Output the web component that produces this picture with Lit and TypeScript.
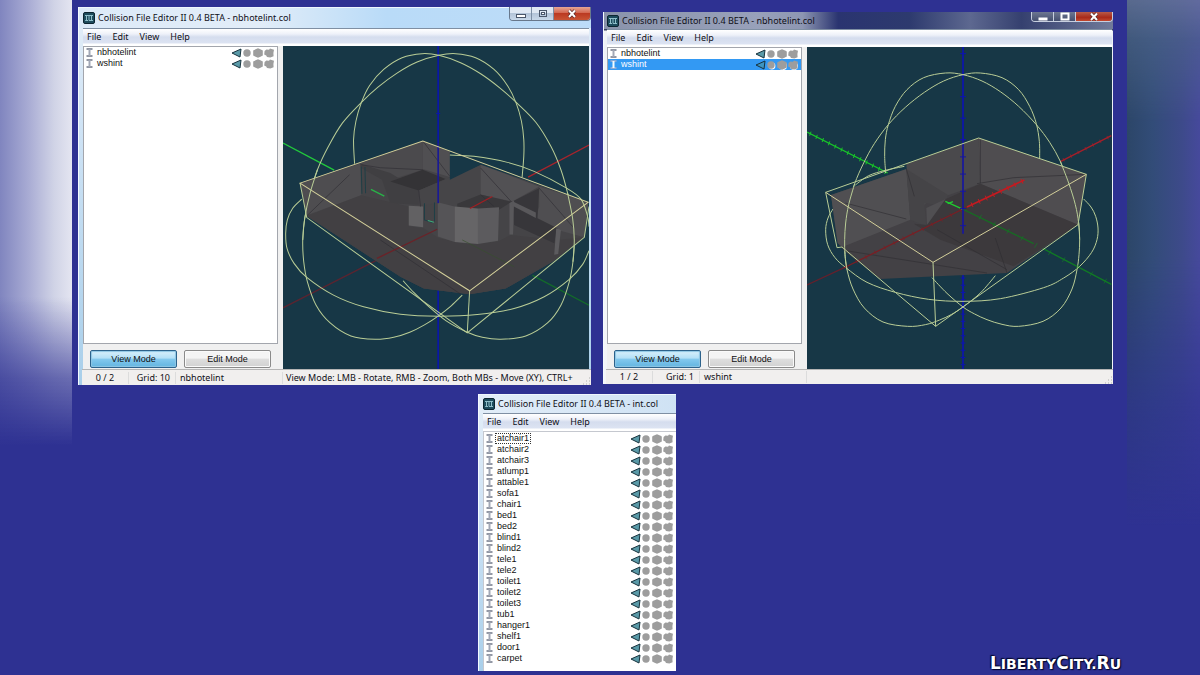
import { LitElement, html, css, svg, nothing } from "lit";
import { customElement, property } from "lit/decorators.js";
import { classMap } from "lit/directives/class-map.js";

type Pt = [number, number];

/** Smooth open curve through the given points (Catmull-Rom converted to cubic beziers). */
function curve(pts: Pt[]): string {
  let d = `M${pts[0][0]} ${pts[0][1]}`;
  for (let i = 0; i < pts.length - 1; i++) {
    const p0 = pts[i - 1] ?? pts[i];
    const p1 = pts[i];
    const p2 = pts[i + 1];
    const p3 = pts[i + 2] ?? p2;
    d += `C${p1[0] + (p2[0] - p0[0]) / 6} ${p1[1] + (p2[1] - p0[1]) / 6} ${p2[0] - (p3[0] - p1[0]) / 6} ${p2[1] - (p3[1] - p1[1]) / 6} ${p2[0]} ${p2[1]}`;
  }
  return d;
}

/** Tick marks placed along an axis segment. */
function ticks(a: Pt, b: Pt, n: number, dx: number, dy: number): string {
  let d = "";
  for (let i = 0; i <= n; i++) {
    const x = a[0] + ((b[0] - a[0]) * i) / n;
    const y = a[1] + ((b[1] - a[1]) * i) / n;
    d += `M${x - dx} ${y - dy}L${x + dx} ${y + dy}`;
  }
  return d;
}

const poly = (points: string, fill: string) => svg`<polygon points=${points} fill=${fill}></polygon>`;
const line = (d: string, stroke: string, w = 3) =>
  svg`<path d=${d} fill="none" stroke=${stroke} stroke-width=${w}></path>`;

const WIRE = "#b9cd96";
const BOX = "#d3cf9a";

const hotelScene = svg`
  ${line("M9 310L162 391", "#22c93c", 4)}
  ${line("M924 316L742 412", "#a8242c", 4)}
  ${line("M9 803L300 655", "#5a2430", 4)}
  ${line("M755 706L924 795", "#136a2a", 4)}
  ${line("M473 20V310M473 750V988", "#0a16a8", 5)}
  ${line(curve([[223, 372], [220, 300], [227, 245], [243, 190], [268, 138], [310, 90], [365, 55], [425, 43], [475, 48], [540, 70], [600, 103], [657, 145], [708, 190], [765, 248], [810, 320], [840, 390], [860, 460], [875, 535], [880, 600], [876, 665], [865, 725], [840, 795], [800, 848], [735, 887], [660, 897], [605, 891], [560, 876], [497, 842], [440, 795], [400, 757], [368, 722]]), WIRE)}
  ${line(curve([[724, 412], [729, 350], [729, 300], [722, 245], [706, 190], [680, 138], [640, 90], [585, 55], [525, 43], [475, 48], [410, 68], [350, 101], [293, 143], [242, 190], [187, 250], [145, 320], [112, 390], [90, 460], [74, 535], [68, 600], [71, 665], [82, 725], [108, 795], [150, 848], [212, 887], [285, 897], [340, 891], [388, 876], [432, 854], [475, 826], [512, 797], [545, 765]]), WIRE)}
  ${line(curve([[65, 478], [38, 505], [22, 540], [17, 580], [21, 625], [42, 670], [80, 712], [160, 765], [250, 800], [360, 822], [475, 828], [590, 823], [700, 805], [790, 770], [865, 718], [905, 673], [924, 632]]), WIRE)}
  ${poly("60,430 427,304 508,336 508,420 600,375 922,487 910,592 820,662 675,745 567,762 430,745 360,710 80,528", "#454447")}
  ${poly("60,430 240,372 243,466 80,526", "#4e4d50")}
  ${poly("240,372 427,304 427,390 330,420", "#4b4a4d")}
  ${poly("427,304 508,336 508,412 427,388", "#504f52")}
  ${poly("240,372 330,400 415,452 415,495 330,490 305,420 243,385", "#403f42")}
  ${poly("330,425 427,390 495,418 415,452", "#343336")}
  ${poly("415,452 600,375 600,465 525,500 475,488 415,500", "#464548")}
  ${poly("600,375 775,440 695,485 600,465", "#525154")}
  ${poly("530,492 600,464 692,486 655,510 530,506", "#39383b")}
  ${poly("80,528 243,466 385,500 385,560 430,565 475,595 560,612 650,605 690,585 830,600 905,592 820,662 675,745 567,762 430,745 360,710", "#424043")}
  ${poly("775,440 922,487 910,592 830,570 765,538 775,500", "#4f4e51")}
  ${poly("695,485 775,445 770,535 830,565 820,610 700,555", "#37363a")}
  ${poly("385,498 428,500 428,562 385,557", "#626163")}
  ${poly("472,487 522,500 522,606 472,590", "#555457")}
  ${poly("522,500 592,506 592,612 522,606", "#666567")}
  ${poly("592,506 655,502 652,602 592,612", "#5c5b5e")}
  ${poly("686,490 700,482 697,584 686,584", "#59585b")}
  ${poly("695,484 765,518 765,534 695,498", "#59585b")}
  ${poly("826,565 840,570 832,642 820,644", "#5c5b5e")}
  ${poly("508,340 600,375 508,420", "#173746")}
  ${line("M80 528L208 405M243 375L300 384L427 390M427 304L508 410M300 600L540 762M600 385L692 486M775 445L875 560M415 452L420 500M600 465L640 500", "#302f34", 2)}
  ${line("M243 380L245 462M254 382L256 460M432 490V540L456 548M462 488V545", "#1f3f46", 3)}
  ${line("M272 449L312 469", "#28b448", 4)}
  ${line("M470 568L290 655", "#6b2228", 4)}
  ${line("M568 506L635 470", "#a01e22", 4)}
  ${line("M545 600L700 680", "#37502f", 2)}
  ${line("M442 542L460 547", "#3fae7c", 3)}
  ${line("M473 310V490", "#1a1a94", 5)}
  ${line(ticks([473, 222], [473, 222], 1, 6, 0), "#0a16a8")}
  ${line(curve([[508, 346], [580, 350], [680, 368], [760, 395], [857, 445], [900, 478], [920, 530], [924, 560]]), WIRE)}
  ${line("M60 430L80 533L560 878L910 592L924 500", WIRE)}
  ${line("M567 752L560 878", WIRE)}
  ${line("M60 430L427 304L922 487L567 752Z", BOX)}
  ${line(curve([[860, 460], [875, 535], [880, 600], [876, 665]]), WIRE)}
  ${line(curve([[112, 390], [90, 460], [74, 535], [68, 600]]), WIRE)}`;

const shopScene = svg`
  ${line("M20 277L262 400", "#18c828", 4)}
  ${line(ticks([30, 282], [255, 397], 12, 2, -6), "#18c828", 3)}
  ${line("M933 288L780 366", "#a81e28", 4)}
  ${line(ticks([922, 294], [790, 360], 6, 2, 5), "#a81e28", 2)}
  ${line("M20 736L140 680", "#64202c", 4)}
  ${line("M700 612L933 734", "#107a24", 4)}
  ${line("M488 22V300M488 705V988", "#0c14b0", 5)}
  ${line(ticks([488, 42], [488, 300], 4, 9, 0), "#0c14b0", 3)}
  ${line(ticks([488, 715], [488, 975], 12, 7, 0), "#0c14b0", 3)}
  ${line(curve([[256, 400], [253, 350], [255, 300], [264, 255], [285, 200], [320, 150], [370, 114], [435, 100], [488, 105], [545, 124], [600, 156], [655, 200], [708, 255], [748, 308], [780, 365], [805, 430], [825, 495], [835, 550], [838, 600], [836, 645], [830, 690], [815, 748], [782, 805], [728, 845], [655, 860], [605, 854], [560, 840], [523, 823], [488, 802], [440, 761], [395, 714]]), WIRE)}
  ${line(curve([[718, 356], [717, 305], [708, 252], [688, 200], [655, 150], [605, 114], [540, 100], [488, 105], [430, 124], [372, 158], [315, 203], [264, 255], [222, 312], [190, 370], [163, 432], [145, 495], [136, 550], [133, 600], [134, 645], [140, 690], [158, 748], [192, 805], [248, 847], [322, 860], [375, 855], [418, 841], [454, 824], [488, 802], [540, 760], [585, 708]]), WIRE)}
  ${line(curve([[98, 508], [83, 535], [76, 570], [82, 615], [104, 654], [138, 685], [200, 728], [285, 758], [385, 779], [488, 785], [600, 777], [730, 744], [790, 715], [838, 680], [874, 638], [890, 600], [893, 565], [886, 530], [872, 502], [850, 478]]), WIRE)}
  ${line(curve([[165, 436], [205, 408], [255, 392], [312, 380]]), WIRE)}
  ${poly("92,466 320,388 535,295 858,404 833,555 620,700 238,718 130,632 112,610", "#434145")}
  ${poly("92,466 318,388 330,540 126,622 112,610", "#504f52")}
  ${poly("318,372 535,295 540,432 378,490 330,540", "#4a494c")}
  ${poly("535,295 858,404 833,555 540,432", "#4f4d50")}
  ${poly("318,388 442,465 436,500 372,490 378,560 330,540", "#454447")}
  ${poly("378,505 436,478 436,530 380,555", "#504f52")}
  ${poly("436,478 540,432 833,555 640,680 420,600 340,552 380,556", "#3c393c")}
  ${line("M318 388L342 470M540 300V430M135 490L318 538M530 432L640 414L858 404M585 595L620 700M130 632L560 700M410 570L620 690", "#302f34", 2)}
  ${line("M130 685L500 502", "#7a1e24", 4)}
  ${line("M500 502L672 421", "#c41a20", 5)}
  ${line(ticks([140, 680], [480, 512], 12, 3, 6), "#7a1e24", 2)}
  ${line(ticks([515, 495], [665, 425], 7, 3, 7), "#c41a20", 3)}
  ${line("M435 485L490 510", "#20cc30", 4)}
  ${line("M442 492L458 486", "#20cc30", 4)}
  ${line("M490 510L700 612", "#186a24", 4)}
  ${line(ticks([540, 532], [915, 724], 9, 4, -7), "#107a24", 2)}
  ${line("M488 300V582", "#1616a0", 5)}
  ${line(ticks([488, 300], [488, 558], 5, 9, 0), "#1616a0", 3)}
  ${line("M858 404L833 555L406 860", WIRE, 3)}
  ${line("M76 458L110 624L125 622L285 758L406 860L398 668", WIRE)}
  ${line("M76 458L535 295L858 404", WIRE)}
  ${line("M76 458L398 668L858 404", BOX)}
  ${line(curve([[780, 365], [805, 430], [825, 495], [835, 550], [838, 600]]), WIRE)}
  ${line(curve([[163, 432], [145, 495], [136, 550], [133, 600], [134, 645], [140, 690]]), WIRE)}`;

const scenes: Record<string, unknown> = {
  hotel: svg`<svg viewBox="9 20 915 966" preserveAspectRatio="xMidYMid slice">${hotelScene}</svg>`,
  shop: svg`<svg viewBox="20 22 915 966" preserveAspectRatio="xMidYMid slice">${shopScene}</svg>`,
};

const appIcon = html`<svg class="app-icon" viewBox="0 0 12 12" aria-hidden="true">
  <rect x="0.5" y="0.5" width="11" height="11" rx="1.5" fill="#1d4b5c" stroke="#0c2530"></rect>
  <path d="M2 3.5H10M3.5 3.5V8M6 3.5V8M8.5 3.5V8M2.2 8.5H5M5.8 8.5H10" stroke="#8fbfca" stroke-width="1" fill="none"></path>
</svg>`;

const beamIcon = html`<svg class="beam" viewBox="0 0 7 9" aria-hidden="true">
  <path d="M0.5 1H6.5M0.5 8H6.5" stroke="#6f7686" stroke-width="1.4"></path>
  <path d="M3.5 1V8" stroke="#a2a8b6" stroke-width="2"></path>
</svg>`;

@customElement("collision-row")
class CollisionRow extends LitElement {
  static styles = css`
    :host {
      display: flex;
      align-items: center;
      height: 11px;
      padding: 0 2px;
      color: #111;
    }
    :host([selected]) {
      background: #3399f3;
      color: #fff;
    }
    .beam { width: 7px; height: 9px; flex: none; }
    :host([selected]) .beam { filter: brightness(1.5); }
    .name { padding: 0 1px; margin-left: 3px; line-height: 9px; }
    :host([focused]) .name { outline: 1px dotted #333; }
    .flags { width: 44px; height: 10px; margin-left: auto; flex: none; }
  `;
  @property() name = "";
  @property({ type: Boolean, reflect: true }) selected = false;
  render() {
    const hi = this.selected ? "#fff" : "none";
    return html`${beamIcon}<span class="name">${this.name}</span>
      <svg class="flags" viewBox="0 0 44 10" aria-hidden="true">
        <path d="M1 5L10 1L9 9Z" fill=${this.selected ? "#3f95c0" : "#5a9aa8"} stroke="#17323d" stroke-width="1"></path>
        <g fill=${hi} transform="translate(1 1)">
          <circle cx="16" cy="5" r="3.4"></circle><circle cx="27" cy="5" r="4"></circle><circle cx="38" cy="5" r="4"></circle>
        </g>
        <g fill="#9d9d9d">
          <circle cx="16" cy="5" r="3.7"></circle>
          <path d="M27 0.2L29.4 1.2L31.8 2.4V7.6L29.4 8.8L27 9.8L24.6 8.8L22.2 7.6V2.4L24.6 1.2Z"></path>
          <path d="M33.6 3L35.4 1.4L38 1.8L39 0.6L43 1.8L42.4 5L42.6 8.2L39.4 9.6L36 9L35.2 7.4L33.2 6.4Z"></path>
        </g>
      </svg>`;
  }
}

@customElement("editor-window")
class EditorWindow extends LitElement {
  static styles = css`
    :host {
      display: block;
      background: linear-gradient(#e4eef8 0, #cfe3f5 120px, #a9cfea 100%);
      font: 9px/12px "Noto Sans", sans-serif;
      color: #101018;
    }
    .window { display: flex; flex-direction: column; padding: 0 2px 0 4px; border-left: 1px solid #f4faff; }
    .window.dark { padding: 0 1px 0 3px; background: linear-gradient(#5d6780 0, #39415f 18px, #eef1f6 19px, #f4f6f9 100%); }
    .window.cropped { padding-right: 0; }
    .title {
      display: flex;
      align-items: center;
      gap: 3px;
      height: 21px;
      margin: 0 -2px 0 -4px;
      padding-left: 4px;
      background: linear-gradient(90deg, #dceaf8, #e2edf8 35%, #b9dbf8 60%, #bddcf8);
      box-shadow: inset 0 1px #eef6fd;
    }
    .cropped .title { height: 19px; margin-right: 0; background: linear-gradient(90deg, #e2edf8, #cfe2f4); }
    .dark .title {
      height: 17px;
      margin: 0 -1px 0 -3px;
      padding-left: 3px;
      background: linear-gradient(90deg, #8a93ab, #98a1ba 30%, #8d96b2 39%, #2a3470 46%, #2d3a6e 60%, #5d6890 72%, #35406f 82%, #717b9a);
      box-shadow: none;
    }
    .title h1 { margin: 0; font-size: inherit; font-weight: 400; white-space: nowrap; }
    .app-icon { width: 12px; height: 12px; flex: none; }
    .caption { display: flex; align-self: flex-start; margin-left: auto; height: 14px; border: 1px solid #68788c; border-top: 0; border-radius: 0 0 4px 4px; overflow: hidden; box-sizing: border-box; }
    .dark .caption { height: 10px; border-color: #c7cfdf; }
    .caption button { display: grid; place-items: center; width: 22px; border: 0; border-right: 1px solid #7c8ea4; padding: 0; background: linear-gradient(#dfe8f3 45%, #b3c4d8 50%, #c9d9ea); }
    .caption button:last-child { width: 36px; border: 0; background: linear-gradient(#e5a596 0, #d3674f 45%, #bb3a22 50%, #c95434); }
    .dark .caption button { background: linear-gradient(#6d7791, #444f70); border-color: #c7cfdf; }
    .dark .caption button:last-child { background: linear-gradient(#b85a48, #a92a1a 60%, #c2492f); }
    .caption svg { width: 10px; height: 10px; }
    nav {
      display: flex;
      gap: 11px;
      height: 16px;
      padding: 0 4px;
      align-items: center;
      border-top: 1px solid #7f8fa3;
      background: linear-gradient(#fff 0, #eef1f9 5px, #d5ddee 8px, #dce3f2 14px, #fff 15px);
    }
    nav button { border: 0; padding: 0; background: none; font: inherit; color: inherit; }
    .body { display: flex; background: #f0f0f0; border-top: 1px solid #fff; }
    .side { display: flex; flex-direction: column; flex: none; width: 200px; box-sizing: border-box; padding-right: 5px; font-family: "Liberation Sans", Arial, sans-serif; }
    .cropped .side { width: auto; flex: 1; padding: 0; }
    .list { flex: 1; box-sizing: border-box; border: 1px solid #a3a6ad; background: #fff; }
    .cropped .list { border-right: 0; border-bottom: 0; border-color: #c5c8cf; padding: 1px 0 7px; }
    .modes { display: grid; grid-template-columns: 1fr 1fr; gap: 7px; padding: 6px 7px 1px; }
    .modes button { height: 18px; padding: 0; border: 1px solid #8a8a8a; border-radius: 2px; background: linear-gradient(#f4f4f4 45%, #dedede 50%, #d2d2d2); font: inherit; color: #111; box-shadow: inset 0 0 0 1px #fafafa; }
    .modes button.on { border-color: #2c628b; background: linear-gradient(#d9f0fb 0, #b3e0f7 45%, #84c9ee 50%, #62b4e0); box-shadow: inset 0 0 1px 1px #8ec6e4; }
    .view { flex: 1; min-width: 0; background: #173746; }
    .view svg { display: block; width: 100%; }
    footer { display: flex; height: 15px; margin: 0 -2px 0 -1px; align-items: center; background: #f1efee; border-top: 1px solid #b5b5b5; white-space: nowrap; }
    .dark footer { height: 14px; margin-right: -1px; }
    footer span { box-sizing: border-box; border-right: 1px solid #dcdcdc; }
    .count { width: 47px; text-align: center; }
    .grid { width: 47px; padding-right: 5px; text-align: right; }
    .model { width: 107px; padding-left: 4px; }
    footer .hint { flex: 1; min-width: 0; overflow: hidden; border: 0; padding-left: 3px; }
    .grip { width: 8px; height: 8px; flex: none; align-self: flex-end; }
  `;
  @property() file = "";
  @property() scene = "";
  @property() count = "";
  @property() grid = "";
  @property() model = "";
  @property() hint = "";
  @property({ type: Array }) items: string[] = [];
  @property({ type: Number }) selected = -1;
  @property({ type: Number }) focusedRow = -1;
  @property({ type: Boolean }) dark = false;

  private renderCaption() {
    const ink = this.dark ? "none" : "#4a5669";
    return html`<div class="caption">
      <button aria-label="Minimize"><svg viewBox="0 0 10 10"><rect x="0.5" y="5.5" width="9" height="3" fill="#fff" stroke=${ink}></rect></svg></button>
      <button aria-label="Maximize"><svg viewBox="0 0 10 10"><rect x="1.5" y="1.5" width="7" height="6" fill="none" stroke=${this.dark ? "#fff" : "#4a5669"} stroke-width=${this.dark ? 2 : 1}></rect>${this.dark ? nothing : svg`<rect x="3.5" y="3.5" width="3" height="2" fill="#fff" stroke=${ink}></rect>`}</svg></button>
      <button aria-label="Close"><svg viewBox="0 0 10 10"><path d="M2 1.5L8 8M8 1.5L2 8" stroke="#5c2a2a" stroke-width="3.4"></path><path d="M2 1.5L8 8M8 1.5L2 8" stroke="#fff" stroke-width="2"></path></svg></button>
    </div>`;
  }

  render() {
    const full = this.scene !== "";
    return html`<section class=${classMap({ window: true, dark: this.dark, cropped: !full })}>
      <header class="title">${appIcon}<h1>Collision File Editor II 0.4 BETA - ${this.file}</h1>${full ? this.renderCaption() : nothing}</header>
      <nav>${["File", "Edit", "View", "Help"].map((m) => html`<button>${m}</button>`)}</nav>
      <div class="body">
        <div class="side">
          <div class="list" role="listbox" aria-label="Models">
            ${this.items.map((name, i) => html`<collision-row role="option" .name=${name} ?selected=${i === this.selected} ?focused=${i === this.focusedRow}></collision-row>`)}
          </div>
          ${full ? html`<div class="modes"><button class="on">View Mode</button><button>Edit Mode</button></div>` : nothing}
        </div>
        ${full ? html`<div class="view">${scenes[this.scene]}</div>` : nothing}
      </div>
      ${full
        ? html`<footer><span class="count">${this.count}</span><span class="grid">${this.grid}</span><span class="model">${this.model}</span><span class="hint">${this.hint}</span>
            <svg class="grip" viewBox="0 0 8 8"><path d="M6 1h1M6 4h1M3 4h1M6 7h1M3 7h1M0 7h1" stroke="#b0b0b0"></path></svg></footer>`
        : nothing}
    </section>`;
  }
}

@customElement("app-root")
class AppRoot extends LitElement {
  static styles = css`
    :host { display: grid; grid-template-columns: 72fr 1055fr 73fr; min-height: 100vh; background: #2e3192; }
    .left {
      background:
        linear-gradient(transparent 44%, #2e3192aa 56%, #2e3192 66%),
        linear-gradient(90deg, #8085bf, #a9acd4 40%, #d0d3e6 75%, #e4e5f1);
    }
    .right {
      background:
        linear-gradient(#6f7ba0aa 0, #51688c88 6%, transparent 18%, transparent 38%, #2e3192aa 60%, #2e3192 78%),
        linear-gradient(90deg, #2c4668, #324c78 35%, #3d4a8a 75%, #46499c);
    }
    main { padding: 7px 14px 4px 6px; }
    .pair { display: grid; grid-template-columns: 513fr 510fr; gap: 12px; align-items: start; }
    .pair editor-window + editor-window { margin-top: 5px; }
    .third { width: 198px; margin: 9px 0 0 400px; }
    .mark {
      position: absolute;
      right: 79px;
      bottom: 3px;
      font: bold 14px/16px "DejaVu Sans", sans-serif;
      text-transform: uppercase;
      color: #fff;
      text-shadow: 0 0 2px #05082c, 1px 1px 1px #05082c, -1px -1px 1px #05082c;
    }
    .mark b { font-size: 17px; }
  `;
  render() {
    const props = ["atchair1", "atchair2", "atchair3", "atlump1", "attable1", "sofa1", "chair1", "bed1", "bed2", "blind1", "blind2", "tele1", "tele2", "toilet1", "toilet2", "toilet3", "tub1", "hanger1", "shelf1", "door1", "carpet"];
    return html`<div class="left"></div>
      <main>
        <div class="pair">
          <editor-window file="nbhotelint.col" scene="hotel" .items=${["nbhotelint", "wshint"]} count="0 / 2" grid="Grid: 10" model="nbhotelint"
            hint="View Mode: LMB - Rotate, RMB - Zoom, Both MBs - Move (XY), CTRL+"></editor-window>
          <editor-window dark file="nbhotelint.col" scene="shop" .items=${["nbhotelint", "wshint"]} .selected=${1} count="1 / 2" grid="Grid: 1" model="wshint"></editor-window>
        </div>
        <editor-window class="third" file="int.col" .items=${props} .focusedRow=${0}></editor-window>
      </main>
      <div class="right"></div>
      <div class="mark"><b>L</b>iberty<b>C</b>ity.<b>R</b>u</div>`;
  }
}
